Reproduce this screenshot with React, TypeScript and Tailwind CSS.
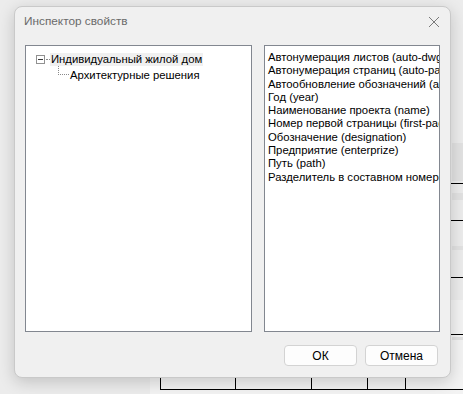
import React from "react";

const props = [
  "Автонумерация листов (auto-dwg",
  "Автонумерация страниц (auto-pag",
  "Автообновление обозначений (au",
  "Год (year)",
  "Наименование проекта (name)",
  "Номер первой страницы (first-pag",
  "Обозначение (designation)",
  "Предприятие (enterprize)",
  "Путь (path)",
  "Разделитель в составном номере",
];

// фон: кусок чертежа под окном
const Backdrop = () => (
  <div className="absolute inset-0 bg-[#ececec]">
    <div className="absolute left-[150px] top-[300px] right-0 bottom-0 bg-[#f3f3f3]" />
    <div className="absolute left-[452px] top-[143px] right-0 h-[38px] bg-[#e2e2e2]" />
    <div className="absolute left-[452px] top-[193px] right-0 h-[7px] bg-[#e2e2e2]" />
    <div className="absolute left-[452px] top-[246px] right-0 h-[4px] bg-[#e2e2e2]" />
    <div className="absolute left-[452px] top-[337px] right-0 h-[3px] bg-[#e2e2e2]" />
    {[183, 220, 277, 334].map((y) => (
      <div key={y} className="absolute left-[450px] right-0 h-px bg-black" style={{ top: y }} />
    ))}
    <div className="absolute left-[160px] top-[370px] w-px h-[20px] bg-black" />
    <div className="absolute left-[235px] top-[370px] w-px h-[20px] bg-black" />
    <div className="absolute left-[311px] top-[370px] w-px h-[20px] bg-black" />
    <div className="absolute left-[367px] top-[370px] w-px h-[20px] bg-black" />
    <div className="absolute left-[405px] top-[370px] w-px h-[20px] bg-black" />
    <div className="absolute left-[160px] right-0 top-[389px] h-px bg-black" />
  </div>
);

const Tree = () => (
  <div className="pt-[6px] pl-[10px] text-[11.3px] leading-[13px] text-black" style={{ fontFamily: "Tahoma, 'Liberation Sans', sans-serif" }}>
    <div className="flex items-center h-[14px]">
      <div className="w-[9px] h-[9px] border border-[#919191] bg-white flex items-center justify-center">
        <div className="w-[5px] h-px bg-[#3a3a3a]" />
      </div>
      <div className="w-[4px] border-t border-dotted border-[#8a8a8a] ml-px" />
      <span className="bg-[#f0f0f0] px-px">Индивидуальный жилой дом</span>
    </div>
    <div className="flex items-start h-[15px]">
      <div className="ml-[22px] w-[11px] h-[9px] border-l border-b border-dotted border-[#8a8a8a]" />
      <span className="ml-px mt-[3px]">Архитектурные решения</span>
    </div>
  </div>
);

export default function App() {
  return (
    <div className="relative w-[463px] h-[394px] overflow-hidden" style={{ fontFamily: "'Segoe UI', 'Liberation Sans', sans-serif" }}>
      <Backdrop />
      <div className="absolute left-[14px] top-[6px] w-[437px] h-[372px] rounded-[8px] border border-[#c9c9c9] bg-[#f0f0f0] shadow-[0_4px_16px_rgba(0,0,0,0.18)] flex flex-col">
        <div className="flex items-center justify-between h-[30px] pl-[9px] pr-[9px]">
          <span className="text-[11.8px] text-[#6a6a6a]">Инспектор свойств</span>
          <svg width="12" height="12" viewBox="0 0 12 12" className="mr-[1px]">
            <path d="M1 1 L11 11 M11 1 L1 11" stroke="#7a7a7a" strokeWidth="1" />
          </svg>
        </div>
        <div className="flex gap-[12px] pl-[10px] pt-[8px]">
          <div className="w-[227px] h-[287px] bg-white border border-[#828790]">
            <Tree />
          </div>
          <div
            className="w-[176px] h-[287px] bg-white border border-[#828790] overflow-hidden pl-[3px] pt-[5px] text-[11.3px] leading-[13.3px] text-black whitespace-nowrap"
            style={{ fontFamily: "Tahoma, 'Liberation Sans', sans-serif" }}
          >
            {props.map((p) => (
              <div key={p}>{p}</div>
            ))}
          </div>
        </div>
        <div className="flex justify-end gap-[8px] pr-[12px] pt-[13px]">
          <button className="w-[73px] h-[21px] rounded-[4px] border border-[#d3d3d3] bg-[#fdfdfd] text-[12px] text-black">ОК</button>
          <button className="w-[73px] h-[21px] rounded-[4px] border border-[#d3d3d3] bg-[#fdfdfd] text-[12px] text-black">Отмена</button>
        </div>
      </div>
    </div>
  );
}
